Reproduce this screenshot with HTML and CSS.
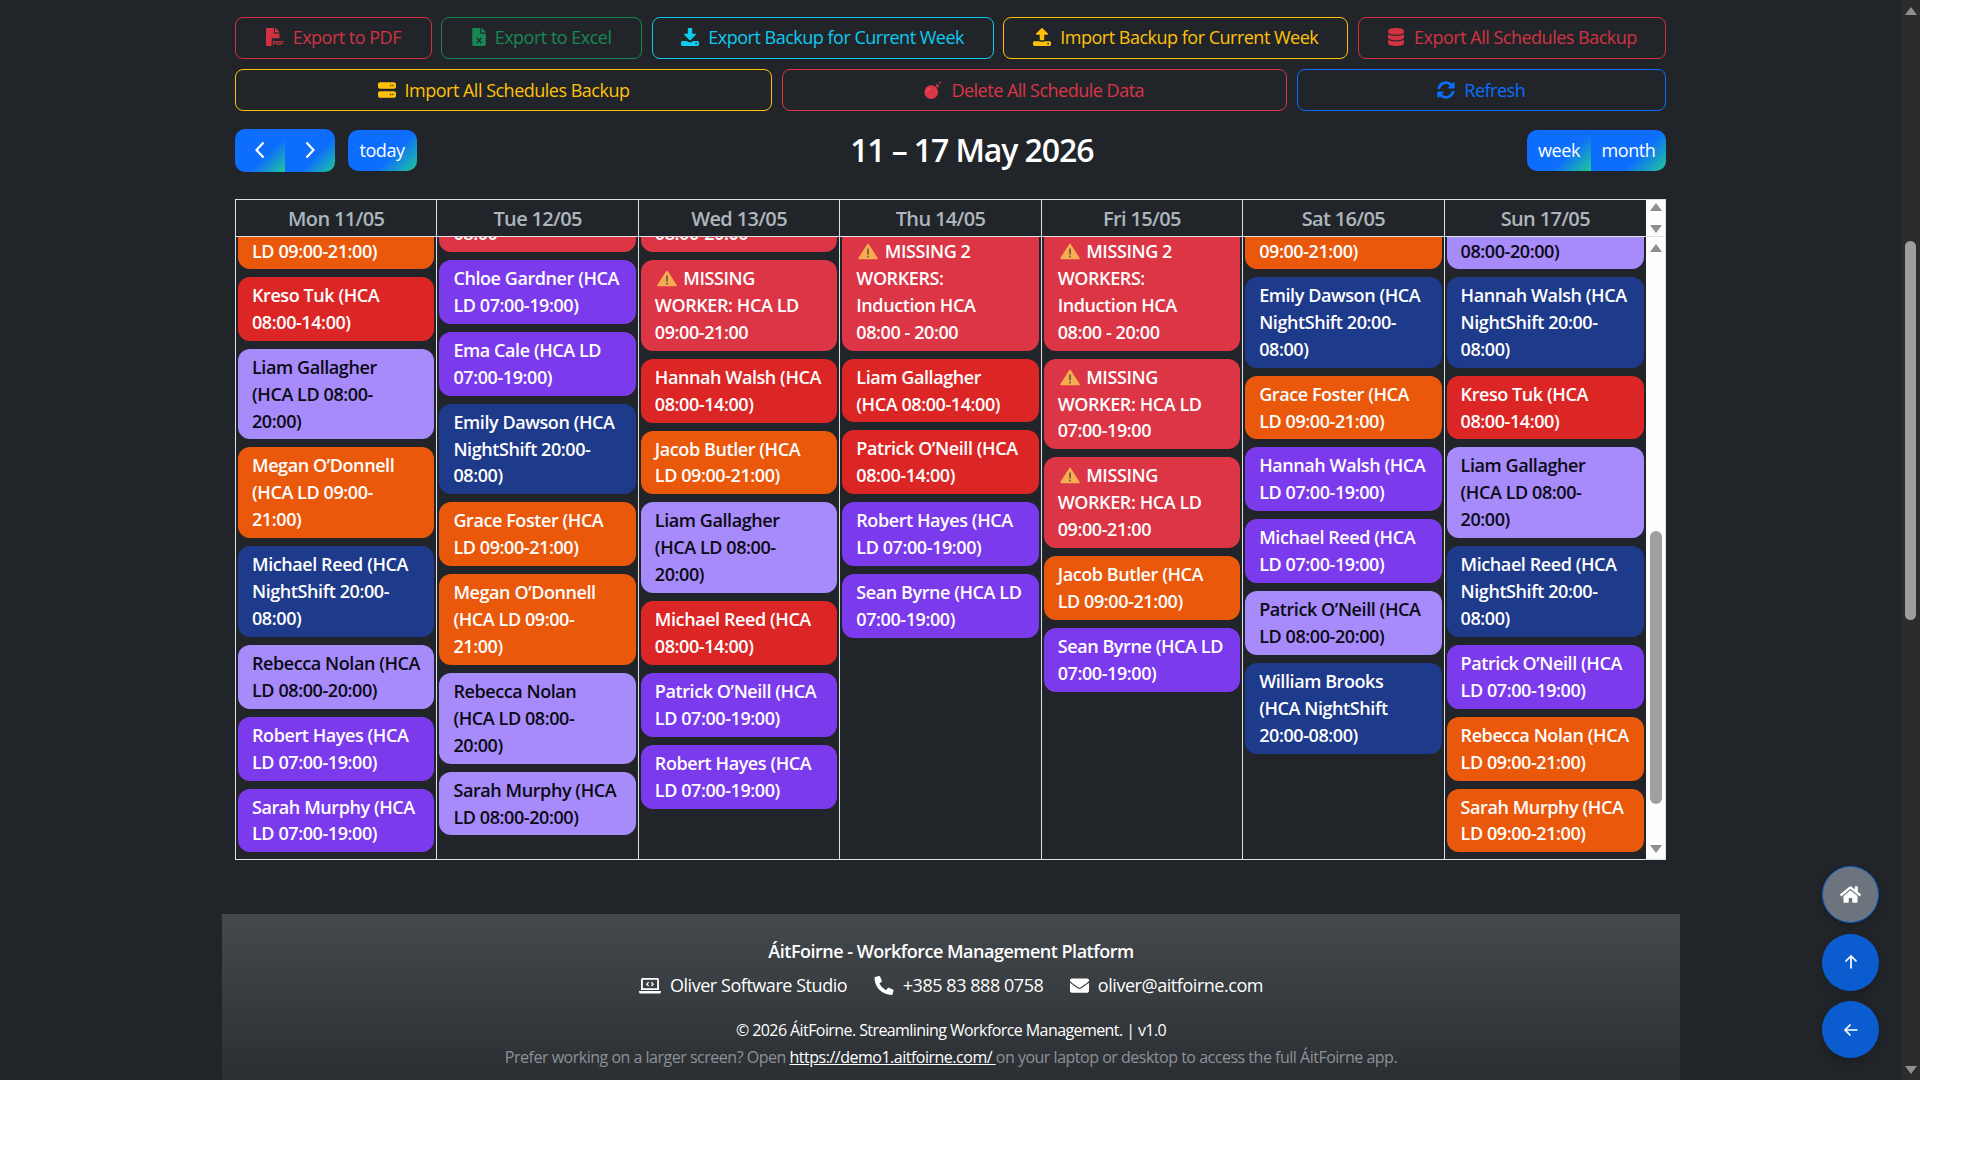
FILE: index.html
```html
<!DOCTYPE html>
<html lang="en">
<head>
  <meta charset="UTF-8">
  <title>Schedule</title>
  <link rel="stylesheet" href="styles.css">
</head>
<body>
<div class="app">
  <div class="main">
    <div class="page">
      <div class="inner">

        <!-- Export / import buttons -->
        <div class="tools tools-top">
          <button class="tool dim-red"><svg class="ico ico-pdf" viewBox="0 0 512 512"><path d="M224 136V0H24C10.700 0 0 10.700 0 24v464c0 13.300 10.700 24 24 24h136V320c0-17.700 14.300-32 32-32h192V160H248c-13.200 0-24-10.800-24-24zM384 121.900v6.100H256V0h6.100c6.400 0 12.500 2.500 17 7l97.900 98c4.500 4.500 7 10.600 7 16.900z"/><text class="pdf-label" x="178" y="490">PDF</text></svg>Export to PDF</button>
          <button class="tool dim-green"><svg class="ico ico-file" viewBox="0 0 384 512"><path d="M224 136V0H40C18 0 0 18 0 40v432c0 22 18 40 40 40h304c22 0 40-18 40-40V160H248c-13.200 0-24-10.800-24-24zM384 121.900v6.100H256V0h6.100c6.400 0 12.500 2.500 17 7l97.900 98c4.500 4.500 7 10.600 7 16.900z"/><path class="cross" d="M125 280l134 150M259 280L125 430"/></svg>Export to Excel</button>
          <button class="tool cyan"><svg class="ico" viewBox="0 0 512 512"><path d="M216 0h80c13.300 0 24 10.700 24 24v136h88c17.800 0 26.700 21.500 14.100 34.100L270.100 346.200c-7.500 7.500-19.800 7.500-27.300 0L90.700 194.100C78.100 181.500 87 160 104.800 160H192V24c0-13.300 10.700-24 24-24z"/><path d="M512 410v60c0 23-19 42-42 42H42c-23 0-42-19-42-42v-60c0-23 19-42 42-42h120l52 30c26 14 58 14 84 0l52-30h120c23 0 42 19 42 42z"/><circle class="hole" cx="430" cy="440" r="24"/></svg>Export Backup for Current Week</button>
          <button class="tool amber"><svg class="ico" viewBox="0 0 512 512"><path d="M296 350h-80c-13.300 0-24-10.700-24-24V192h-88c-17.800 0-26.700-21.500-14.100-34.100L241.900 5.700c7.500-7.500 19.800-7.500 27.300 0l152.200 152.200c12.600 12.600 3.700 34.100-14.100 34.100H320v134c0 13.300-10.700 24-24 24z"/><path d="M512 420v50c0 23-19 42-42 42H42c-23 0-42-19-42-42v-50c0-23 19-42 42-42h136c8 6 22 10 38 10h80c16 0 30-4 38-10h136c23 0 42 19 42 42z"/><circle class="hole" cx="430" cy="445" r="24"/></svg>Import Backup for Current Week</button>
          <button class="tool dim-red"><svg class="ico" viewBox="0 0 448 512"><path d="M448 73.143v45.714C448 159.143 347.667 192 224 192S0 159.143 0 118.857V73.143C0 32.857 100.333 0 224 0s224 32.857 224 73.143zM448 176v102.857C448 319.143 347.667 352 224 352S0 319.143 0 278.857V176c48.125 33.143 136.208 48.572 224 48.572S399.874 209.143 448 176zm0 160v102.857C448 479.143 347.667 512 224 512S0 479.143 0 438.857V336c48.125 33.143 136.208 48.572 224 48.572S399.874 369.143 448 336z"/></svg>Export All Schedules Backup</button>
        </div>
        <div class="tools tools-bottom">
          <button class="tool amber"><svg class="ico" viewBox="0 0 512 512"><path d="M56 36h400c31 0 56 25 56 56v72c0 31-25 56-56 56H56c-31 0-56-25-56-56V92c0-31 25-56 56-56zm0 256h400c31 0 56 25 56 56v72c0 31-25 56-56 56H56c-31 0-56-25-56-56v-72c0-31 25-56 56-56z"/><circle class="hole" cx="360" cy="128" r="20"/><circle class="hole" cx="420" cy="128" r="20"/><circle class="hole" cx="360" cy="384" r="20"/><circle class="hole" cx="420" cy="384" r="20"/></svg>Import All Schedules Backup</button>
          <button class="tool red"><svg class="ico" viewBox="0 0 512 512"><circle cx="205" cy="315" r="195"/><path d="M325 118l38-38 72 72-38 38z"/><path class="bomb-shine" d="M92 300c8-50 40-85 85-95"/><path class="fuse" d="M450 15v66M417 48h66"/></svg>Delete All Schedule Data</button>
          <button class="tool blue"><svg class="ico" viewBox="0 0 512 512"><path d="M370.720 133.280C339.458 104.008 298.888 87.962 255.848 88c-77.458.068-144.328 53.178-162.791 126.850-1.344 5.363-6.122 9.150-11.651 9.150H24.103c-7.498 0-13.194-6.807-11.807-14.176C33.933 94.924 134.813 8 256 8c66.448 0 126.791 26.136 171.315 68.685L463.030 40.970C478.149 25.851 504 36.559 504 57.941V192c0 13.255-10.745 24-24 24H345.941c-21.382 0-32.090-25.851-16.971-40.971l41.750-41.749zM32 296h134.059c21.382 0 32.090 25.851 16.971 40.971l-41.750 41.750c31.262 29.273 71.835 45.319 114.876 45.280 77.418-.070 144.315-53.144 162.787-126.849 1.344-5.363 6.122-9.150 11.651-9.150h57.304c7.498 0 13.194 6.807 11.807 14.176C478.067 417.076 377.187 504 256 504c-66.448 0-126.791-26.136-171.315-68.685L48.970 471.030C33.851 486.149 8 475.441 8 454.059V320c0-13.255 10.745-24 24-24z"/></svg>Refresh</button>
        </div>

        <!-- Calendar toolbar -->
        <div class="cal-toolbar">
          <div class="cal-left">
            <div class="btn-group nav-group">
              <button class="grad-btn"><svg class="chev" viewBox="0 0 12 20"><path d="M9.500 2.500L2.500 10l7 7.500"/></svg></button>
              <button class="grad-btn"><svg class="chev" viewBox="0 0 12 20"><path d="M2.500 2.500l7 7.500-7 7.500"/></svg></button>
            </div>
            <button class="grad-btn today">today</button>
          </div>
          <h2 class="cal-title">11 – 17 May 2026</h2>
          <div class="btn-group view-group">
            <button class="grad-btn">week</button>
            <button class="grad-btn">month</button>
          </div>
        </div>

        <!-- Week grid -->
        <div class="cal">
          <div class="cal-head">
            <div class="day-name">Mon 11/05</div>
            <div class="day-name">Tue 12/05</div>
            <div class="day-name">Wed 13/05</div>
            <div class="day-name">Thu 14/05</div>
            <div class="day-name">Fri 15/05</div>
            <div class="day-name">Sat 16/05</div>
            <div class="day-name">Sun 17/05</div>
            <div class="mini-bar head-bar"><i class="arr up"></i><i class="arr down"></i></div>
          </div>
          <div class="cal-body">

            <div class="day">
              <div class="ev orange cut">LD 09:00-21:00)</div>
              <div class="ev crimson">Kreso Tuk (HCA<br>08:00-14:00)</div>
              <div class="ev lilac">Liam Gallagher<br>(HCA LD 08:00-<br>20:00)</div>
              <div class="ev orange">Megan O’Donnell<br>(HCA LD 09:00-<br>21:00)</div>
              <div class="ev navy">Michael Reed (HCA<br>NightShift 20:00-<br>08:00)</div>
              <div class="ev lilac">Rebecca Nolan (HCA<br>LD 08:00-20:00)</div>
              <div class="ev violet">Robert Hayes (HCA<br>LD 07:00-19:00)</div>
              <div class="ev violet">Sarah Murphy (HCA<br>LD 07:00-19:00)</div>
            </div>

            <div class="day">
              <div class="ev missing cut-low">08:00</div>
              <div class="ev violet">Chloe Gardner (HCA<br>LD 07:00-19:00)</div>
              <div class="ev violet">Ema Cale (HCA LD<br>07:00-19:00)</div>
              <div class="ev navy">Emily Dawson (HCA<br>NightShift 20:00-<br>08:00)</div>
              <div class="ev orange">Grace Foster (HCA<br>LD 09:00-21:00)</div>
              <div class="ev orange">Megan O’Donnell<br>(HCA LD 09:00-<br>21:00)</div>
              <div class="ev lilac">Rebecca Nolan<br>(HCA LD 08:00-<br>20:00)</div>
              <div class="ev lilac">Sarah Murphy (HCA<br>LD 08:00-20:00)</div>
            </div>

            <div class="day">
              <div class="ev missing cut-low">08:00-20:00</div>
              <div class="ev missing"><svg class="warn" viewBox="0 0 20 17"><path class="warn-tri" d="M10 1.500L19 15.500H1z"/><path class="warn-mark" d="M10 5.500v6M10 12.800v1.600"/></svg>MISSING<br>WORKER: HCA LD<br>09:00-21:00</div>
              <div class="ev crimson">Hannah Walsh (HCA<br>08:00-14:00)</div>
              <div class="ev orange">Jacob Butler (HCA<br>LD 09:00-21:00)</div>
              <div class="ev lilac">Liam Gallagher<br>(HCA LD 08:00-<br>20:00)</div>
              <div class="ev crimson">Michael Reed (HCA<br>08:00-14:00)</div>
              <div class="ev violet">Patrick O’Neill (HCA<br>LD 07:00-19:00)</div>
              <div class="ev violet">Robert Hayes (HCA<br>LD 07:00-19:00)</div>
            </div>

            <div class="day">
              <div class="ev missing cut-top"><svg class="warn" viewBox="0 0 20 17"><path class="warn-tri" d="M10 1.500L19 15.500H1z"/><path class="warn-mark" d="M10 5.500v6M10 12.800v1.600"/></svg>MISSING 2<br>WORKERS:<br>Induction HCA<br>08:00 - 20:00</div>
              <div class="ev crimson">Liam Gallagher<br>(HCA 08:00-14:00)</div>
              <div class="ev crimson">Patrick O’Neill (HCA<br>08:00-14:00)</div>
              <div class="ev violet">Robert Hayes (HCA<br>LD 07:00-19:00)</div>
              <div class="ev violet">Sean Byrne (HCA LD<br>07:00-19:00)</div>
            </div>

            <div class="day">
              <div class="ev missing cut-top"><svg class="warn" viewBox="0 0 20 17"><path class="warn-tri" d="M10 1.500L19 15.500H1z"/><path class="warn-mark" d="M10 5.500v6M10 12.800v1.600"/></svg>MISSING 2<br>WORKERS:<br>Induction HCA<br>08:00 - 20:00</div>
              <div class="ev missing"><svg class="warn" viewBox="0 0 20 17"><path class="warn-tri" d="M10 1.500L19 15.500H1z"/><path class="warn-mark" d="M10 5.500v6M10 12.800v1.600"/></svg>MISSING<br>WORKER: HCA LD<br>07:00-19:00</div>
              <div class="ev missing"><svg class="warn" viewBox="0 0 20 17"><path class="warn-tri" d="M10 1.500L19 15.500H1z"/><path class="warn-mark" d="M10 5.500v6M10 12.800v1.600"/></svg>MISSING<br>WORKER: HCA LD<br>09:00-21:00</div>
              <div class="ev orange">Jacob Butler (HCA<br>LD 09:00-21:00)</div>
              <div class="ev violet">Sean Byrne (HCA LD<br>07:00-19:00)</div>
            </div>

            <div class="day">
              <div class="ev orange cut">09:00-21:00)</div>
              <div class="ev navy">Emily Dawson (HCA<br>NightShift 20:00-<br>08:00)</div>
              <div class="ev orange">Grace Foster (HCA<br>LD 09:00-21:00)</div>
              <div class="ev violet">Hannah Walsh (HCA<br>LD 07:00-19:00)</div>
              <div class="ev violet">Michael Reed (HCA<br>LD 07:00-19:00)</div>
              <div class="ev lilac">Patrick O’Neill (HCA<br>LD 08:00-20:00)</div>
              <div class="ev navy">William Brooks<br>(HCA NightShift<br>20:00-08:00)</div>
            </div>

            <div class="day">
              <div class="ev lilac cut">08:00-20:00)</div>
              <div class="ev navy">Hannah Walsh (HCA<br>NightShift 20:00-<br>08:00)</div>
              <div class="ev crimson">Kreso Tuk (HCA<br>08:00-14:00)</div>
              <div class="ev lilac">Liam Gallagher<br>(HCA LD 08:00-<br>20:00)</div>
              <div class="ev navy">Michael Reed (HCA<br>NightShift 20:00-<br>08:00)</div>
              <div class="ev violet">Patrick O’Neill (HCA<br>LD 07:00-19:00)</div>
              <div class="ev orange">Rebecca Nolan (HCA<br>LD 09:00-21:00)</div>
              <div class="ev orange">Sarah Murphy (HCA<br>LD 09:00-21:00)</div>
            </div>

            <div class="mini-bar body-bar">
              <i class="arr up"></i>
              <div class="mini-thumb"></div>
              <i class="arr down"></i>
            </div>
          </div>
        </div>
      </div>

      <!-- Footer -->
      <footer class="footer">
        <div class="foot-title">ÁitFoirne - Workforce Management Platform</div>
        <div class="foot-contact">
          <span class="contact"><svg class="foot-ico" viewBox="0 0 24 18"><path d="M4 .8h16A1.800 1.800 0 0 1 21.800 2.600v11.400H2.200V2.600A1.800 1.800 0 0 1 4 .8zm.2 2v9.300h15.600V2.800z" fill-rule="evenodd"/><path d="M0 15h24v.8A2 2 0 0 1 22 17.800H2A2 2 0 0 1 0 15.800z"/><path class="code" d="M10.500 5.500l-2 2 2 2M13.500 5.500l2 2-2 2"/></svg>Oliver Software Studio</span>
          <span class="contact"><svg class="foot-ico phone" viewBox="0 0 512 512"><path d="M497.390 361.800l-112-48a24 24 0 0 0-28 6.900l-49.600 60.600A370.660 370.660 0 0 1 130.600 204.110l60.600-49.600a23.940 23.940 0 0 0 6.900-28l-48-112A24.160 24.160 0 0 0 122.600.61l-104 24A24 24 0 0 0 0 48c0 256.500 207.900 464 464 464a24 24 0 0 0 23.400-18.600l24-104a24.290 24.290 0 0 0-14.010-27.600z"/></svg>+385 83 888 0758</span>
          <span class="contact"><svg class="foot-ico mail" viewBox="0 0 512 512"><path d="M502.300 190.800c3.900-3.100 9.700-.2 9.700 4.700V400c0 26.500-21.500 48-48 48H48c-26.500 0-48-21.500-48-48V195.600c0-5 5.700-7.800 9.700-4.700 22.400 17.400 52.100 39.500 154.100 113.600 21.100 15.400 56.700 47.800 92.200 47.600 35.700.3 72-32.800 92.300-47.600 102-74.100 131.600-96.300 154-113.700zM256 320c23.200.4 56.600-29.200 73.400-41.400 132.700-96.300 142.800-104.700 173.400-128.700 5.800-4.500 9.200-11.500 9.200-18.900v-19c0-26.500-21.500-48-48-48H48C21.500 64 0 85.500 0 112v19c0 7.400 3.400 14.300 9.200 18.900 30.600 23.900 40.700 32.400 173.400 128.700 16.800 12.200 50.200 41.800 73.400 41.400z"/></svg>oliver@aitfoirne.com</span>
        </div>
        <div class="foot-copy">© 2026 ÁitFoirne. Streamlining Workforce Management. | v1.0</div>
        <div class="foot-note">Prefer working on a larger screen? Open <a href="#">https://demo1.aitfoirne.com/ </a>on your laptop or desktop to access the full ÁitFoirne app.</div>
      </footer>
    </div>
  </div>

  <!-- Page scrollbar -->
  <div class="page-bar">
    <i class="arr up"></i>
    <div class="page-thumb"></div>
    <i class="arr down"></i>
  </div>

  <!-- Floating buttons -->
  <div class="fabs">
    <button class="fab fab-home"><svg viewBox="0 0 576 512"><path d="M280.370 148.260L96 300.110V464a16 16 0 0 0 16 16l112.060-.29a16 16 0 0 0 15.920-16V368a16 16 0 0 1 16-16h64a16 16 0 0 1 16 16v95.640a16 16 0 0 0 16 16.050L464 480a16 16 0 0 0 16-16V300L295.670 148.260a12.190 12.190 0 0 0-15.300 0zM571.600 251.470L488 182.560V44.050a12 12 0 0 0-12-12h-56a12 12 0 0 0-12 12v72.610L318.470 43a48 48 0 0 0-61 0L4.340 251.470a12 12 0 0 0-1.600 16.900l25.500 31A12 12 0 0 0 45.150 301l235.220-193.740a12.190 12.190 0 0 1 15.300 0L530.900 301a12 12 0 0 0 16.900-1.600l25.500-31a12 12 0 0 0-1.700-16.930z"/></svg></button>
    <button class="fab"><svg class="fab-arrow" viewBox="0 0 16 16"><path d="M8 14.500V2M2.500 7.500L8 2l5.500 5.500"/></svg></button>
    <button class="fab"><svg class="fab-arrow" viewBox="0 0 16 16"><path d="M14.500 8H2M7.500 2.500L2 8l5.500 5.500"/></svg></button>
  </div>
</div>
</body>
</html>
```

FILE: styles.css
```css
* {
  box-sizing: border-box;
}
body {
  margin: 0;
  background-color: #fff;
  font-family: "Open Sans", "Liberation Sans", sans-serif;
  font-size: 18px;
  color: #fff;
}
button {
  font-family: inherit;
  cursor: pointer;
}
.app {
  position: relative;
  display: flex;
  width: 1920px;
  height: 1080px;
  overflow: hidden;
  background-color: #212529;
}
.main {
  flex: 1;
  min-width: 0;
}
.page {
  width: 1458px;
  margin-left: 222px;
}
.inner {
  padding: 17px 14px 0 13px;
}

/* toolbar buttons */
.tools {
  display: grid;
  column-gap: 9.5px;
  height: 42px;
}
.tools-top {
  grid-template-columns: 196.5fr 201fr 342fr 345fr 308fr;
}
.tools-bottom {
  grid-template-columns: 537fr 505.5fr 369.5fr;
  margin-top: 9.5px;
}
.tool {
  display: flex;
  align-items: center;
  justify-content: center;
  gap: 9px;
  padding: 0;
  background: transparent;
  border: 1px solid currentColor;
  border-radius: 8px;
  font-size: 18px;
  letter-spacing: -0.5px;
  white-space: nowrap;
}
.tools-top .tool {
  padding-bottom: 2px;
}
.ico {
  width: 18px;
  height: 18px;
  fill: currentColor;
}
.ico-file {
  width: 14px;
}
.pdf-label {
  font-family: "Liberation Sans", sans-serif;
  font-size: 170px;
  font-weight: 700;
  letter-spacing: -6px;
}
.dim-red { color: #d33242; }
.dim-green { color: #198754; }
.cyan { color: #0dcaf0; }
.amber { color: #ffc107; }
.red { color: #dc3545; }
.blue { color: #0d6efd; }
.cross {
  fill: none;
  stroke: #212529;
  stroke-width: 40;
}
.hole {
  fill: #212529;
}
.fuse {
  fill: none;
  stroke: currentColor;
  stroke-width: 26;
}
.bomb-shine {
  fill: none;
  stroke: #e9717d;
  stroke-width: 22;
}

/* calendar toolbar */
.cal-toolbar {
  display: flex;
  align-items: center;
  justify-content: space-between;
  height: 43px;
  margin-top: 18.5px;
}
.cal-left {
  display: flex;
  align-items: center;
  gap: 13px;
}
.cal-title {
  margin: 0 0 2px;
  font-size: 32px;
  font-weight: 600;
  letter-spacing: -1.1px;
  line-height: 41px;
}
.btn-group {
  display: flex;
}
.grad-btn {
  display: flex;
  align-items: center;
  justify-content: center;
  padding: 0 0 2px;
  border: none;
  border-radius: 8px;
  background: linear-gradient(135deg, #0d6efd 62%, #20c997);
  color: #fff;
  font-size: 18px;
  letter-spacing: -0.45px;
}
.nav-group {
  height: 43px;
}
.nav-group .grad-btn {
  width: 49.75px;
}
.btn-group .grad-btn:first-child {
  border-radius: 10px 0 0 10px;
}
.btn-group .grad-btn:last-child {
  border-radius: 0 10px 10px 0;
}
.today {
  width: 69px;
  height: 41px;
  border-radius: 10px;
}
.chev {
  width: 12px;
  height: 20px;
  fill: none;
  stroke: #fff;
  stroke-width: 2.2;
}
.view-group {
  height: 41px;
}
.view-group .grad-btn:first-child {
  width: 64px;
}
.view-group .grad-btn:last-child {
  width: 75px;
}

/* week grid */
.cal {
  height: 660.5px;
  margin-top: 27px;
  border: 1px solid #dee2e6;
  display: flex;
  flex-direction: column;
}
.cal-head {
  display: grid;
  grid-template-columns: repeat(7, 1fr) 19px;
  height: 37px;
  border-bottom: 1px solid #dee2e6;
  flex: none;
}
.day-name {
  display: flex;
  align-items: center;
  justify-content: center;
  border-right: 1px solid #dee2e6;
  color: #adb5bd;
  font-size: 20px;
  font-weight: 600;
  letter-spacing: -0.65px;
}
.day-name:nth-child(7) {
  border-right: none;
}
.cal-body {
  flex: 1;
  min-height: 0;
  display: grid;
  grid-template-columns: repeat(7, 1fr) 19px;
}
.day {
  display: flex;
  flex-direction: column;
  gap: 8px;
  padding: 0 2px;
  border-right: 1px solid #dee2e6;
  overflow: hidden;
}
.day:nth-child(7) {
  border-right: none;
}
.ev {
  padding: 5px 14px;
  border-radius: 12px;
  color: #fff;
  font-size: 18px;
  font-weight: 600;
  letter-spacing: -0.42px;
  line-height: 26.9px;
  white-space: nowrap;
  flex: none;
}
/* events scrolled partly out of view at the top of the list */
.cut,
.cut-top,
.cut-low {
  border-top-left-radius: 0;
  border-top-right-radius: 0;
}
.cut {
  padding-top: 1px;
  padding-bottom: 4px;
}
.cut-top {
  padding-top: 1px;
}
.cut-low {
  display: flex;
  align-items: flex-end;
  height: 15px;
  padding-top: 0;
  overflow: hidden;
}
.orange { background-color: #ea580c; }
.crimson { background-color: #dc2626; }
.lilac { background-color: #a78bfa; color: #0a0a14; }
.violet { background-color: #7c3aed; }
.navy { background-color: #1e3a8a; }
.missing { background-color: #dc3545; }
.warn {
  width: 20px;
  height: 17px;
  margin: 0 6.5px 0 2px;
  vertical-align: -2px;
}
.warn-tri {
  fill: #f6ad4f;
  stroke: #f6ad4f;
  stroke-width: 1.6;
  stroke-linejoin: round;
}
.warn-mark {
  fill: none;
  stroke: #6f5a48;
  stroke-width: 1.7;
}

/* fake scrollbars */
.mini-bar {
  display: flex;
  flex-direction: column;
  align-items: center;
  background-color: #fdfdfd;
}
.head-bar {
  gap: 14px;
  padding-top: 3px;
}
.body-bar {
  padding-top: 7px;
  padding-bottom: 5.5px;
}
.mini-thumb {
  width: 12px;
  height: 273px;
  margin-top: 279px;
  border-radius: 6px;
  background-color: #a0a0a0;
}
.body-bar .arr.down {
  margin-top: auto;
}
.arr {
  display: block;
  width: 0;
  height: 0;
  border-left: 6.5px solid transparent;
  border-right: 6.5px solid transparent;
}
.arr.up {
  border-bottom: 8px solid #909090;
}
.arr.down {
  border-top: 8px solid #909090;
}
.page-bar {
  flex: none;
  width: 19px;
  display: flex;
  flex-direction: column;
  align-items: center;
  padding: 7px 0 6px;
  background-color: #2c2c2c;
}
.page-thumb {
  width: 11px;
  height: 379px;
  margin-top: 226px;
  border-radius: 6px;
  background-color: #9e9e9e;
}
.page-bar .arr.down {
  margin-top: auto;
}

/* footer */
.footer {
  height: 166px;
  margin-top: 54.5px;
  padding-top: 24px;
  background: linear-gradient(180deg, #44494d, #2b2f33);
  text-align: center;
}
.foot-title {
  font-weight: 600;
  letter-spacing: -0.5px;
  line-height: 27px;
}
.foot-contact {
  display: flex;
  justify-content: center;
  gap: 26.5px;
  margin-top: 7px;
  line-height: 27px;
  letter-spacing: -0.45px;
}
.contact {
  display: flex;
  align-items: center;
  gap: 9px;
}
.foot-ico {
  width: 22px;
  height: 17px;
  fill: #fff;
}
.foot-ico.phone {
  width: 20px;
  height: 19px;
}
.foot-ico.mail {
  width: 19px;
  height: 19px;
}
.code {
  fill: none;
  stroke: #fff;
  stroke-width: 1.4;
}
.foot-copy {
  margin-top: 19px;
  font-size: 16px;
  letter-spacing: -0.58px;
  line-height: 24px;
}
.foot-note {
  margin-top: 3px;
  color: #8c9196;
  font-size: 16px;
  letter-spacing: -0.49px;
  line-height: 24px;
}
.foot-note a {
  color: #fff;
}

/* floating buttons */
.fabs {
  position: absolute;
  right: 41px;
  bottom: 22px;
  display: flex;
  flex-direction: column;
  gap: 10.5px;
}
.fab {
  display: flex;
  align-items: center;
  justify-content: center;
  width: 57px;
  height: 57px;
  padding: 0;
  border: none;
  border-radius: 50%;
  background-color: #0b5ccf;
  box-shadow: 0 4px 10px rgba(0, 0, 0, 0.2);
}
.fab svg {
  width: 21px;
  height: 19px;
  fill: #fff;
}
.fab-home {
  background-color: #6c757d;
  border: 1px solid #0b5ccf;
}
.fab .fab-arrow {
  width: 16px;
  height: 16px;
  fill: none;
  stroke: #fff;
  stroke-width: 1.7;
}
```
